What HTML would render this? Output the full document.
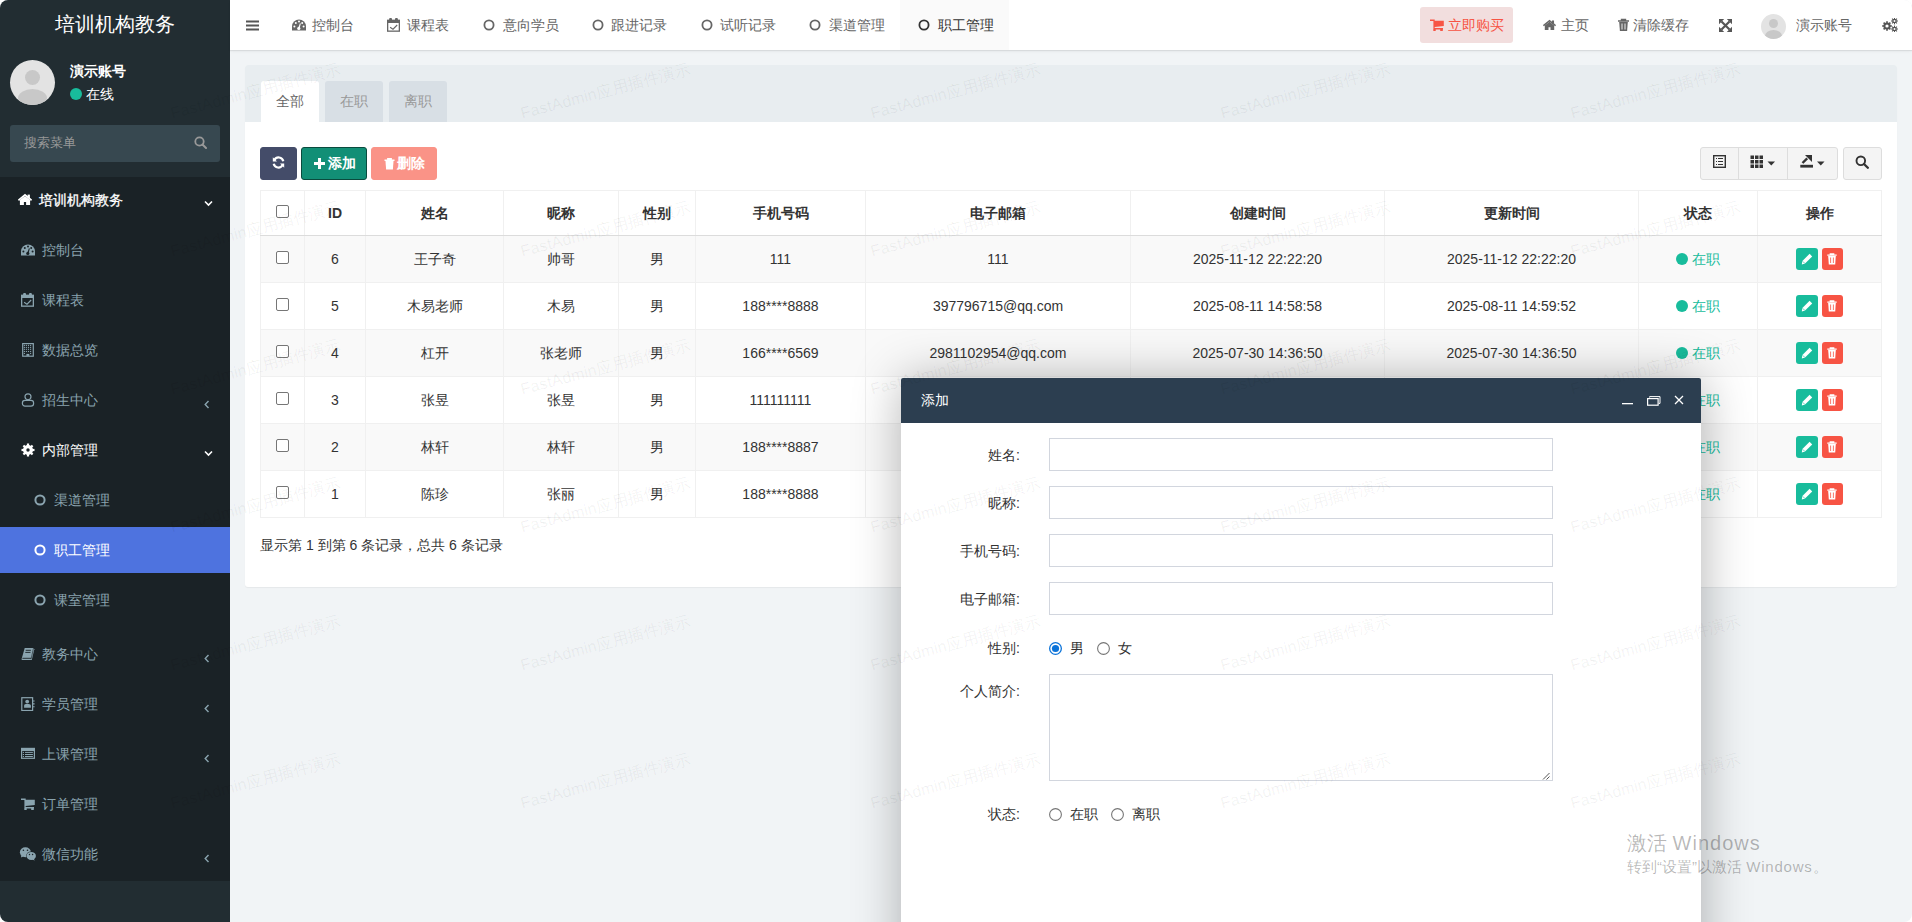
<!DOCTYPE html>
<html><head><meta charset="utf-8">
<style>
*{box-sizing:border-box;margin:0;padding:0}
html,body{width:1912px;height:922px;overflow:hidden;background:#fff}
body{font-family:"Liberation Sans",sans-serif;font-size:14px;color:#333;line-height:20px}
#win{position:absolute;left:0;top:0;width:1912px;height:922px;border-radius:8px;overflow:hidden;background:#f1f4f6}
.a{position:absolute}
svg{display:block}
/* sidebar */
#side{left:0;top:0;width:230px;height:922px;background:#222d32}
#logo{left:0;top:0;width:230px;height:50px;line-height:48px;text-align:center;color:#fff;font-size:20px}
#menu{left:0;top:177px;width:230px;height:704px;background:#1a2226}
.mi{position:absolute;left:0;width:230px;height:20px;line-height:20px;color:#8aa4af;white-space:nowrap}
.mi .ic{position:absolute;top:0;left:0}
.mi .tx{position:absolute;top:0}
.mi.w{color:#fff}
/* navbar */
#nav{left:230px;top:0;width:1682px;height:50px;background:#fff;box-shadow:0 1px 1px rgba(0,0,0,.08),0 2px 3px rgba(0,0,0,.03)}
.ni{position:absolute;top:0;height:50px;line-height:50px;color:#666;white-space:nowrap}
/* content */
#panel{left:245px;top:65px;width:1652px;height:522px;background:#fff;border-radius:3px;box-shadow:0 1px 1px rgba(0,0,0,.05)}
#ph{left:0;top:0;width:1652px;height:57px;background:#e8edf0;border-radius:3px 3px 0 0}
.tab{position:absolute;top:16px;height:41px;width:58px;text-align:center;line-height:41px;background:#d8dfe5;color:#999;border-radius:3px 3px 0 0}
.tab.on{background:#fff;color:#666}
.btn{position:absolute;top:147px;height:33px;border-radius:3px;color:#fff;line-height:31px;text-align:center;white-space:nowrap}
table{position:absolute;left:260px;top:190px;border-collapse:collapse;table-layout:fixed}
td,th{border:1px solid #f0f0f0;text-align:center;vertical-align:middle;padding:0;font-size:14px;color:#333}
th{height:45px;font-weight:bold;border-bottom:1px solid #dcdcdc}
td{height:47px}
tr.s td{background:#f9f9f9}
.cb{display:inline-block;width:13px;height:13px;border:1px solid #767676;border-radius:2px;background:#fff;vertical-align:middle;position:relative;top:-3px}
/* modal */
#shade{left:901px;top:378px;width:800px;height:600px;box-shadow:1px 1px 50px rgba(0,0,0,.3);border-radius:2px}
#modal{left:901px;top:378px;width:800px;height:600px;background:#fff;border-radius:2px 2px 0 0}
#mt{left:0;top:0;width:800px;height:45px;background:#2c3e50;color:#fff;line-height:45px;padding-left:20px;border-radius:2px 2px 0 0}
.lb{position:absolute;width:120px;text-align:right;color:#333;left:0}
.inp{position:absolute;left:148px;width:504px;height:33px;border:1px solid #d2d6de;background:#fff}
.rad{position:absolute;width:13px;height:13px;border:1px solid #767676;border-radius:50%;background:#fff}
.rad.on{border:1px solid #0075ff}
.rad.on:after{content:"";position:absolute;left:2px;top:2px;width:7px;height:7px;border-radius:50%;background:#0075ff}
#wm{left:0;top:0;width:1912px;height:922px;pointer-events:none}
</style></head><body>
<div id="win">

<!-- SIDEBAR -->
<div id="side" class="a">
  <div id="logo" class="a">培训机构教务</div>
  <div class="a" style="left:10px;top:60px;width:45px;height:45px;border-radius:50%;background:#e3e3e3;overflow:hidden">
    <div class="a" style="left:15px;top:10px;width:15px;height:15px;border-radius:50%;background:#c8c8c8"></div>
    <div class="a" style="left:8px;top:29px;width:29px;height:18px;border-radius:50%;background:#c8c8c8"></div>
  </div>
  <div class="a" style="left:70px;top:61px;color:#fff;font-weight:bold;line-height:20px">演示账号</div>
  <div class="a" style="left:70px;top:88px;width:12px;height:12px;border-radius:50%;background:#18bc9c"></div>
  <div class="a" style="left:86px;top:84px;color:#fff;line-height:20px">在线</div>
  <div class="a" style="left:10px;top:125px;width:210px;height:37px;background:#374850;border-radius:3px">
    <div class="a" style="left:14px;top:8px;color:#999;line-height:20px;font-size:13px">搜索菜单</div>
    <svg class="a" style="left:184px;top:11px" width="13" height="13" viewBox="0 0 13 13"><circle cx="5.5" cy="5.5" r="4.2" fill="none" stroke="#999" stroke-width="1.8"/><path d="M8.5 8.5L12 12" stroke="#999" stroke-width="2" stroke-linecap="round"/></svg>
  </div>
  <div id="menu" class="a"></div>
  <div class="mi" style="top:190px;color:#fff;-webkit-text-stroke:0.3px #fff"><svg class="a" style="left:18px;top:3px" width="14" height="14" viewBox="0 0 14 14"><path d="M0.4 7.3L7 1.9l6.6 5.4" fill="none" stroke="#fff" stroke-width="1.7"/><rect x="9.6" y="1.6" width="2.3" height="3.6" fill="#fff"/><path d="M1.9 7L7 2.9l5.1 4.1V12H8.1V9H5.9V12H1.9z" fill="#fff"/></svg><span class="tx" style="left:39px">培训机构教务</span><svg class="a" style="left:204px;top:10px" width="9" height="7" viewBox="0 0 9 7"><path d="M1 1.5l3.5 3.5 3.5-3.5" fill="none" stroke="#fff" stroke-width="1.6"/></svg></div>
<div class="mi" style="top:240px;color:#8aa4af"><svg class="a" style="left:21px;top:4px" width="14" height="14" viewBox="0 0 14 14"><path d="M0 11.5V7.5A7 7 0 0 1 14 7.5V11.5z" fill="#8aa4af"/><g fill="#1a2226"><circle cx="2.4" cy="7.6" r="1"/><circle cx="3.8" cy="4" r="1"/><circle cx="7" cy="2.6" r="1"/><circle cx="10.2" cy="4" r="1"/><circle cx="11.6" cy="7.6" r="1"/><circle cx="6.8" cy="9.4" r="1.6"/><path d="M6.1 9.4L7.9 4.2l0.9 0.3L7.5 9.7z"/></g></svg><span class="tx" style="left:42px">控制台</span></div>
<div class="mi" style="top:290px;color:#8aa4af"><svg class="a" style="left:21px;top:3px" width="14" height="14" viewBox="0 0 14 14"><rect x="0.65" y="2.45" width="11.7" height="10.7" fill="none" stroke="#8aa4af" stroke-width="1.3"/><rect x="0" y="1.8" width="13" height="3.2" fill="#8aa4af"/><rect x="2.1" y="0" width="2.9" height="3.6" rx="1" fill="#8aa4af"/><rect x="8" y="0" width="2.9" height="3.6" rx="1" fill="#8aa4af"/><path d="M3.1 9.2l2.9 2 4.2-4.2" fill="none" stroke="#8aa4af" stroke-width="1.1"/></svg><span class="tx" style="left:42px">课程表</span></div>
<div class="mi" style="top:340px;color:#8aa4af"><svg class="a" style="left:21px;top:3px" width="14" height="14" viewBox="0 0 14 14"><rect x="1.7" y="0.6" width="10.6" height="12.6" fill="none" stroke="#8aa4af" stroke-width="1.2"/><rect x="2.8499999999999996" y="1.8499999999999999" width="1.1" height="1.1" fill="#8aa4af"/><rect x="4.8500000000000005" y="1.8499999999999999" width="1.1" height="1.1" fill="#8aa4af"/><rect x="6.95" y="1.8499999999999999" width="1.1" height="1.1" fill="#8aa4af"/><rect x="9.049999999999999" y="1.8499999999999999" width="1.1" height="1.1" fill="#8aa4af"/><rect x="2.8499999999999996" y="3.8500000000000005" width="1.1" height="1.1" fill="#8aa4af"/><rect x="4.8500000000000005" y="3.8500000000000005" width="1.1" height="1.1" fill="#8aa4af"/><rect x="6.95" y="3.8500000000000005" width="1.1" height="1.1" fill="#8aa4af"/><rect x="9.049999999999999" y="3.8500000000000005" width="1.1" height="1.1" fill="#8aa4af"/><rect x="2.8499999999999996" y="5.75" width="1.1" height="1.1" fill="#8aa4af"/><rect x="4.8500000000000005" y="5.75" width="1.1" height="1.1" fill="#8aa4af"/><rect x="6.95" y="5.75" width="1.1" height="1.1" fill="#8aa4af"/><rect x="9.049999999999999" y="5.75" width="1.1" height="1.1" fill="#8aa4af"/><rect x="2.8499999999999996" y="7.95" width="1.1" height="1.1" fill="#8aa4af"/><rect x="4.8500000000000005" y="7.95" width="1.1" height="1.1" fill="#8aa4af"/><rect x="6.95" y="7.95" width="1.1" height="1.1" fill="#8aa4af"/><rect x="9.049999999999999" y="7.95" width="1.1" height="1.1" fill="#8aa4af"/><rect x="2.85" y="9.95" width="1.1" height="1.1" fill="#8aa4af"/><rect x="9.05" y="9.95" width="1.1" height="1.1" fill="#8aa4af"/><rect x="5.4" y="10.9" width="2.9" height="2" fill="#8aa4af"/></svg><span class="tx" style="left:42px">数据总览</span></div>
<div class="mi" style="top:390px;color:#8aa4af"><svg class="a" style="left:21px;top:3px" width="14" height="14" viewBox="0 0 14 14"><circle cx="7" cy="3.8" r="3" fill="none" stroke="#8aa4af" stroke-width="1.2"/><rect x="1.4" y="7.4" width="11.2" height="5.8" rx="2.6" fill="none" stroke="#8aa4af" stroke-width="1.2"/><path d="M4.6 7.4h4.8" stroke="#1a2226" stroke-width="0"/></svg><span class="tx" style="left:42px">招生中心</span><svg class="a" style="left:204px;top:10px" width="6" height="9" viewBox="0 0 6 9"><path d="M4.5 1L1.2 4.5 4.5 8" fill="none" stroke="#8aa4af" stroke-width="1.4"/></svg></div>
<div class="mi" style="top:440px;color:#fff"><svg class="a" style="left:21px;top:3px" width="14" height="14" viewBox="0 0 14 14"><g fill="#fff"><circle cx="7" cy="7" r="5"/><rect x="5.9" y="0.5" width="2.2" height="2.5" transform="rotate(0 7 7)"/><rect x="5.9" y="0.5" width="2.2" height="2.5" transform="rotate(45 7 7)"/><rect x="5.9" y="0.5" width="2.2" height="2.5" transform="rotate(90 7 7)"/><rect x="5.9" y="0.5" width="2.2" height="2.5" transform="rotate(135 7 7)"/><rect x="5.9" y="0.5" width="2.2" height="2.5" transform="rotate(180 7 7)"/><rect x="5.9" y="0.5" width="2.2" height="2.5" transform="rotate(225 7 7)"/><rect x="5.9" y="0.5" width="2.2" height="2.5" transform="rotate(270 7 7)"/><rect x="5.9" y="0.5" width="2.2" height="2.5" transform="rotate(315 7 7)"/></g><circle cx="7" cy="7" r="1.7" fill="#1a2226"/></svg><span class="tx" style="left:42px">内部管理</span><svg class="a" style="left:204px;top:10px" width="9" height="7" viewBox="0 0 9 7"><path d="M1 1.5l3.5 3.5 3.5-3.5" fill="none" stroke="#fff" stroke-width="1.6"/></svg></div>
<div class="mi" style="top:490px;color:#8aa4af"><svg class="a" style="left:34px;top:4px" width="12" height="12" viewBox="0 0 12 12"><circle cx="6" cy="6" r="4.6" fill="none" stroke="#8aa4af" stroke-width="2"/></svg><span class="tx" style="left:54px">渠道管理</span></div>
<div class="a" style="left:0;top:527px;width:230px;height:46px;background:#4e73df"></div>
<div class="mi" style="top:540px;color:#fff"><svg class="a" style="left:34px;top:4px" width="12" height="12" viewBox="0 0 12 12"><circle cx="6" cy="6" r="4.6" fill="none" stroke="#fff" stroke-width="2"/></svg><span class="tx" style="left:54px">职工管理</span></div>
<div class="mi" style="top:590px;color:#8aa4af"><svg class="a" style="left:34px;top:4px" width="12" height="12" viewBox="0 0 12 12"><circle cx="6" cy="6" r="4.6" fill="none" stroke="#8aa4af" stroke-width="2"/></svg><span class="tx" style="left:54px">课室管理</span></div>
<div class="mi" style="top:644px;color:#8aa4af"><svg class="a" style="left:21px;top:3px" width="14" height="14" viewBox="0 0 14 14"><path d="M3.7 1h8.8l0.8 1.2-2.5 10.8H1.2Q0.3 13 0.6 11.9z" fill="#8aa4af"/><path d="M1.4 11.3h8.6M4.7 3.3h5.2M4.3 5.4h5.2" stroke="#1a2226" stroke-width="0.9"/><path d="M12.5 1l-2.4 11.2" stroke="#1a2226" stroke-width="0.6"/></svg><span class="tx" style="left:42px">教务中心</span><svg class="a" style="left:204px;top:10px" width="6" height="9" viewBox="0 0 6 9"><path d="M4.5 1L1.2 4.5 4.5 8" fill="none" stroke="#8aa4af" stroke-width="1.4"/></svg></div>
<div class="mi" style="top:694px;color:#8aa4af"><svg class="a" style="left:21px;top:3px" width="14" height="14" viewBox="0 0 14 14"><rect x="0.8" y="0.7" width="10.8" height="12.8" fill="none" stroke="#8aa4af" stroke-width="1.2"/><circle cx="6.2" cy="4.6" r="1.9" fill="#8aa4af"/><path d="M3.1 10.8V8.6Q3.1 7 4.8 7h2.8Q9.9 7 9.9 8.6v2.2z" fill="#8aa4af"/><path d="M12 4h1.6M12 6.9h1.6M12 9.8h1.6" stroke="#8aa4af" stroke-width="1.1"/></svg><span class="tx" style="left:42px">学员管理</span><svg class="a" style="left:204px;top:10px" width="6" height="9" viewBox="0 0 6 9"><path d="M4.5 1L1.2 4.5 4.5 8" fill="none" stroke="#8aa4af" stroke-width="1.4"/></svg></div>
<div class="mi" style="top:744px;color:#8aa4af"><svg class="a" style="left:21px;top:3px" width="14" height="14" viewBox="0 0 14 14"><rect x="0.6" y="1.5" width="12.8" height="9.8" fill="none" stroke="#8aa4af" stroke-width="1.2"/><rect x="0" y="0.9" width="14" height="3.1" fill="#8aa4af"/><path d="M1.8 5.4h1.2M4 5.4h7.9M1.8 7.5h1.2M4 7.5h7.9M1.8 9.5h1.2M4 9.5h7.9" stroke="#8aa4af" stroke-width="1"/></svg><span class="tx" style="left:42px">上课管理</span><svg class="a" style="left:204px;top:10px" width="6" height="9" viewBox="0 0 6 9"><path d="M4.5 1L1.2 4.5 4.5 8" fill="none" stroke="#8aa4af" stroke-width="1.4"/></svg></div>
<div class="mi" style="top:794px;color:#8aa4af"><svg class="a" style="left:21px;top:3px" width="14" height="14" viewBox="0 0 14 14"><path d="M0 1.6h3.6v1.3H0zM3.4 1.6h1.3v11.4H3.4zM3.4 2.8h10.4v5.2l-9.2 1H3.4zM3.4 9.9h9.6v1.6H3.4zM3.3 11h2.4v2H3.3zM10.2 11h2.6v2h-2.6z" fill="#8aa4af"/></svg><span class="tx" style="left:42px">订单管理</span></div>
<div class="mi" style="top:844px;color:#8aa4af"><svg class="a" style="left:19px;top:3px" width="18" height="15" viewBox="0 0 18 15"><ellipse cx="6.4" cy="5.3" rx="5.5" ry="5" fill="#8aa4af"/><path d="M1.8 8.2l0.6 2.4 2.6-1.6z" fill="#8aa4af"/><ellipse cx="12.2" cy="8.9" rx="5.1" ry="4.4" fill="#1a2226"/><ellipse cx="12.2" cy="8.9" rx="4.7" ry="4" fill="#8aa4af"/><path d="M14.6 11.6l1.2 1.9-2.8-1z" fill="#8aa4af"/><circle cx="4.4" cy="3.3" r="0.8" fill="#1a2226"/><circle cx="8.5" cy="3.3" r="0.8" fill="#1a2226"/><circle cx="10.5" cy="7.5" r="0.7" fill="#1a2226"/><circle cx="13.6" cy="7.5" r="0.7" fill="#1a2226"/></svg><span class="tx" style="left:42px">微信功能</span><svg class="a" style="left:204px;top:10px" width="6" height="9" viewBox="0 0 6 9"><path d="M4.5 1L1.2 4.5 4.5 8" fill="none" stroke="#8aa4af" stroke-width="1.4"/></svg></div>
</div>

<!-- NAVBAR -->
<div id="nav" class="a">
<div class="a" style="left:670px;top:0;width:109px;height:50px;background:#fafafa"></div>
<svg class="a" style="left:16px;top:20px" width="13" height="11" viewBox="0 0 13 11"><rect x="0" y="0.5" width="13" height="2" fill="#555"/><rect x="0" y="4.5" width="13" height="2" fill="#555"/><rect x="0" y="8.5" width="13" height="2" fill="#555"/></svg>
<div class="a" style="left:62px;top:19px"><svg class="a" style="left:0px;top:0px" width="14" height="14" viewBox="0 0 14 14"><path d="M0 11.5V7.5A7 7 0 0 1 14 7.5V11.5z" fill="#666"/><g fill="#fff"><circle cx="2.4" cy="7.6" r="1"/><circle cx="3.8" cy="4" r="1"/><circle cx="7" cy="2.6" r="1"/><circle cx="10.2" cy="4" r="1"/><circle cx="11.6" cy="7.6" r="1"/><circle cx="6.8" cy="9.4" r="1.6"/><path d="M6.1 9.4L7.9 4.2l0.9 0.3L7.5 9.7z"/></g></svg></div><div class="ni" style="left:82px;color:#666">控制台</div>
<div class="a" style="left:157px;top:18px"><svg class="a" style="left:0px;top:0px" width="14" height="14" viewBox="0 0 14 14"><rect x="0.65" y="2.45" width="11.7" height="10.7" fill="none" stroke="#666" stroke-width="1.3"/><rect x="0" y="1.8" width="13" height="3.2" fill="#666"/><rect x="2.1" y="0" width="2.9" height="3.6" rx="1" fill="#666"/><rect x="8" y="0" width="2.9" height="3.6" rx="1" fill="#666"/><path d="M3.1 9.2l2.9 2 4.2-4.2" fill="none" stroke="#666" stroke-width="1.1"/></svg></div><div class="ni" style="left:177px;color:#666">课程表</div>
<div class="a" style="left:253px;top:19px"><svg class="a" style="left:0px;top:0px" width="12" height="12" viewBox="0 0 12 12"><circle cx="6" cy="6" r="4.6" fill="none" stroke="#666" stroke-width="1.8"/></svg></div><div class="ni" style="left:273px;color:#666">意向学员</div>
<div class="a" style="left:362px;top:19px"><svg class="a" style="left:0px;top:0px" width="12" height="12" viewBox="0 0 12 12"><circle cx="6" cy="6" r="4.6" fill="none" stroke="#666" stroke-width="1.8"/></svg></div><div class="ni" style="left:381px;color:#666">跟进记录</div>
<div class="a" style="left:471px;top:19px"><svg class="a" style="left:0px;top:0px" width="12" height="12" viewBox="0 0 12 12"><circle cx="6" cy="6" r="4.6" fill="none" stroke="#666" stroke-width="1.8"/></svg></div><div class="ni" style="left:490px;color:#666">试听记录</div>
<div class="a" style="left:579px;top:19px"><svg class="a" style="left:0px;top:0px" width="12" height="12" viewBox="0 0 12 12"><circle cx="6" cy="6" r="4.6" fill="none" stroke="#666" stroke-width="1.8"/></svg></div><div class="ni" style="left:599px;color:#666">渠道管理</div>
<div class="a" style="left:688px;top:19px"><svg class="a" style="left:0px;top:0px" width="12" height="12" viewBox="0 0 12 12"><circle cx="6" cy="6" r="4.6" fill="none" stroke="#333" stroke-width="1.8"/></svg></div><div class="ni" style="left:708px;color:#333">职工管理</div>
<div class="a" style="left:1190px;top:7px;width:93px;height:36px;background:#f2dede;border-radius:3px"></div>
<div class="a" style="left:1200px;top:18px"><svg class="a" style="left:0px;top:0px" width="14" height="14" viewBox="0 0 14 14"><path d="M0 1.6h3.6v1.3H0zM3.4 1.6h1.3v11.4H3.4zM3.4 2.8h10.4v5.2l-9.2 1H3.4zM3.4 9.9h9.6v1.6H3.4zM3.3 11h2.4v2H3.3zM10.2 11h2.6v2h-2.6z" fill="#f75444"/></svg></div><div class="ni" style="left:1218px;color:#f75444">立即购买</div>
<div class="a" style="left:1313px;top:19px"><svg class="a" style="left:0px;top:0px" width="13" height="12" viewBox="0 0 14 13"><path d="M0.4 7.3L7 1.9l6.6 5.4" fill="none" stroke="#666" stroke-width="1.7"/><rect x="9.6" y="1.6" width="2.3" height="3.6" fill="#666"/><path d="M1.9 7L7 2.9l5.1 4.1V12H8.1V9H5.9V12H1.9z" fill="#666"/></svg></div><div class="ni" style="left:1331px;color:#666">主页</div>
<div class="a" style="left:1387px;top:18px"><svg class="a" style="left:0px;top:0px" width="13" height="14" viewBox="0 0 13 14"><path d="M1 3h11M4.5 3V1.5h4V3" stroke="#666" stroke-width="1.4" fill="none"/><path d="M2.2 4h8.6l-0.7 9H2.9z" fill="#666"/><path d="M5 5.5v6M8 5.5v6" stroke="#fff" stroke-width="0.9"/></svg></div><div class="ni" style="left:1403px;color:#666">清除缓存</div>
<svg class="a" style="left:1489px;top:19px" width="13" height="13" viewBox="0 0 13 13"><path d="M2.5 2.5L10.5 10.5M10.5 2.5L2.5 10.5" stroke="#555" stroke-width="2.2"/><path d="M0 0h5.2L0 5.2zM13 0v5.2L7.8 0zM0 13V7.8L5.2 13zM13 13H7.8L13 7.8z" fill="#555"/></svg>
<div class="a" style="left:1531px;top:14px;width:25px;height:25px;border-radius:50%;background:#e3e3e3;overflow:hidden"><div class="a" style="left:8px;top:5px;width:9px;height:9px;border-radius:50%;background:#c8c8c8"></div><div class="a" style="left:4px;top:16px;width:17px;height:12px;border-radius:50%;background:#c8c8c8"></div></div>
<div class="ni" style="left:1566px">演示账号</div>
<svg class="a" style="left:1652px;top:18px" width="16" height="14" viewBox="0 0 16 14"><g fill="#555"><circle cx="5" cy="8" r="3.6"/><rect x="4.2" y="3.2" width="1.6" height="9.6" transform="rotate(0 5 8)"/><rect x="4.2" y="3.2" width="1.6" height="9.6" transform="rotate(45 5 8)"/><rect x="4.2" y="3.2" width="1.6" height="9.6" transform="rotate(90 5 8)"/><rect x="4.2" y="3.2" width="1.6" height="9.6" transform="rotate(135 5 8)"/></g><circle cx="5" cy="8" r="1.62" fill="#fff"/><g fill="#555"><circle cx="12.5" cy="3" r="2.2"/><rect x="11.95" y="-0.40000000000000013" width="1.1" height="6.800000000000001" transform="rotate(0 12.5 3)"/><rect x="11.95" y="-0.40000000000000013" width="1.1" height="6.800000000000001" transform="rotate(45 12.5 3)"/><rect x="11.95" y="-0.40000000000000013" width="1.1" height="6.800000000000001" transform="rotate(90 12.5 3)"/><rect x="11.95" y="-0.40000000000000013" width="1.1" height="6.800000000000001" transform="rotate(135 12.5 3)"/></g><circle cx="12.5" cy="3" r="0.9900000000000001" fill="#fff"/><g fill="#555"><circle cx="12.5" cy="11" r="2.2"/><rect x="11.95" y="7.6000000000000005" width="1.1" height="6.800000000000001" transform="rotate(0 12.5 11)"/><rect x="11.95" y="7.6000000000000005" width="1.1" height="6.800000000000001" transform="rotate(45 12.5 11)"/><rect x="11.95" y="7.6000000000000005" width="1.1" height="6.800000000000001" transform="rotate(90 12.5 11)"/><rect x="11.95" y="7.6000000000000005" width="1.1" height="6.800000000000001" transform="rotate(135 12.5 11)"/></g><circle cx="12.5" cy="11" r="0.9900000000000001" fill="#fff"/></svg>
</div>

<!-- CONTENT -->
<div id="panel" class="a">
  <div id="ph" class="a">
    <div class="tab on" style="left:16px">全部</div>
    <div class="tab" style="left:80px">在职</div>
    <div class="tab" style="left:144px">离职</div>
  </div>
</div>
<div class="btn" style="left:260px;width:37px;background:#444c69;border:1px solid #444c69"><svg class="a" style="left:11px;top:8px" width="13" height="13" viewBox="0 0 13 13"><path d="M11.3 5.2A4.8 4.8 0 0 0 2.4 4" fill="none" stroke="#fff" stroke-width="2.2"/><path d="M0.8 1.2v4.2H5z" fill="#fff"/><path d="M1.7 7.8A4.8 4.8 0 0 0 10.6 9" fill="none" stroke="#fff" stroke-width="2.2"/><path d="M12.2 11.8V7.6H8z" fill="#fff"/></svg></div>
<div class="btn" style="left:301px;width:66px;background:#128f76;border:1px solid #0a4b3e;font-weight:bold"><svg class="a" style="left:12px;top:10px" width="11" height="11" viewBox="0 0 11 11"><path d="M4 0h3v4h4v3H7v4H4V7H0V4h4z" fill="#fff"/></svg><span class="a" style="left:26px;top:0;line-height:31px">添加</span></div>
<div class="btn" style="left:371px;width:66px;background:#fa9387;border:1px solid #fa9387;font-weight:bold"><svg class="a" style="left:12px;top:10px" width="11" height="12" viewBox="0 0 11 12"><path d="M0.5 2.2h10M3.8 2.2V0.8h3.4v1.4" stroke="#fff" stroke-width="1.4" fill="none"/><path d="M1.5 3h8l-0.6 8.5H2.1z" fill="#fff"/></svg><span class="a" style="left:25px;top:0;line-height:31px">删除</span></div>
<div class="a" style="left:1700px;top:147px;width:138px;height:33px;border:1px solid #ddd;border-radius:3px;background:#f4f4f4"></div>
<div class="a" style="left:1738px;top:148px;width:1px;height:31px;background:#ddd"></div>
<div class="a" style="left:1787px;top:148px;width:1px;height:31px;background:#ddd"></div>
<svg class="a" style="left:1713px;top:155px" width="13" height="13" viewBox="0 0 13 13"><rect x="0.7" y="0.7" width="11.6" height="11.6" fill="none" stroke="#333" stroke-width="1.4"/><path d="M3 3.5h1M5 3.5h5M3 6.5h1M5 6.5h5M3 9.5h1M5 9.5h5" stroke="#333" stroke-width="1.2"/></svg>
<svg class="a" style="left:1750px;top:155px" width="26" height="14" viewBox="0 0 26 14"><rect x="0.5" y="0.5" width="3.5" height="3.5" fill="#333"/><rect x="0.5" y="5" width="3.5" height="3.5" fill="#333"/><rect x="0.5" y="9.5" width="3.5" height="3.5" fill="#333"/><rect x="5" y="0.5" width="3.5" height="3.5" fill="#333"/><rect x="5" y="5" width="3.5" height="3.5" fill="#333"/><rect x="5" y="9.5" width="3.5" height="3.5" fill="#333"/><rect x="9.5" y="0.5" width="3.5" height="3.5" fill="#333"/><rect x="9.5" y="5" width="3.5" height="3.5" fill="#333"/><rect x="9.5" y="9.5" width="3.5" height="3.5" fill="#333"/><path d="M17.5 6.5h7.5l-3.75 4z" fill="#333"/></svg>
<svg class="a" style="left:1799px;top:154px" width="26" height="14" viewBox="0 0 26 14"><rect x="1.3" y="10.8" width="12.7" height="2.8" fill="#333"/><path d="M3.5 9L8.2 4.3" stroke="#333" stroke-width="2.4"/><path d="M6 1h7v7z" fill="#333"/><path d="M18 7.5h7.5l-3.75 4z" fill="#333"/></svg>
<div class="a" style="left:1843px;top:147px;width:39px;height:33px;border:1px solid #ddd;border-radius:3px;background:#f4f4f4"></div>
<svg class="a" style="left:1855px;top:155px" width="14" height="14" viewBox="0 0 14 14"><circle cx="5.8" cy="5.8" r="4.3" fill="none" stroke="#333" stroke-width="1.9"/><path d="M9 9l3.8 3.8" stroke="#333" stroke-width="2.3" stroke-linecap="round"/></svg>
<table><colgroup><col style="width:44px"><col style="width:61px"><col style="width:138px"><col style="width:115px"><col style="width:77px"><col style="width:170px"><col style="width:265px"><col style="width:254px"><col style="width:254px"><col style="width:119px"><col style="width:124px"></colgroup><tr><th><span class="cb"></span></th><th>ID</th><th>姓名</th><th>昵称</th><th>性别</th><th>手机号码</th><th>电子邮箱</th><th>创建时间</th><th>更新时间</th><th>状态</th><th>操作</th></tr><tr class="s"><td><span class="cb"></span></td><td>6</td><td>王子奇</td><td>帅哥</td><td>男</td><td>111</td><td>111</td><td>2025-11-12 22:22:20</td><td>2025-11-12 22:22:20</td><td><span style="display:inline-block;width:12px;height:12px;border-radius:50%;background:#18bc9c;vertical-align:-1px;margin-right:4px"></span><span style="color:#18bc9c">在职</span></td><td><span style="display:inline-block;position:relative;width:22px;height:22px;background:#18bc9c;border-radius:3px;vertical-align:middle"><svg class="a" style="left:5px;top:5px" width="12" height="12" viewBox="0 0 12 12"><path d="M8.6 0.8l2.6 2.6-7.2 7.2-3.2 0.8 0.6-3.4z" fill="#fff"/><path d="M1.8 8.4l1.8 1.8" stroke="#18bc9c" stroke-width="0.7"/></svg></span><span style="display:inline-block;position:relative;width:21px;height:22px;background:#f75444;border-radius:3px;vertical-align:middle;margin-left:4px"><svg class="a" style="left:5px;top:5px" width="10" height="12" viewBox="0 0 10 12"><path d="M0.3 2.2h9.4M3.3 2.2V0.8h3.4v1.4" stroke="#fff" stroke-width="1.3" fill="none"/><path d="M1.2 3h7.6l-0.6 8.5H1.8z" fill="#fff"/><path d="M3.6 4.5v5.5M6.4 4.5v5.5" stroke="#f75444" stroke-width="0.8"/></svg></span></td></tr><tr><td><span class="cb"></span></td><td>5</td><td>木易老师</td><td>木易</td><td>男</td><td>188****8888</td><td>397796715@qq.com</td><td>2025-08-11 14:58:58</td><td>2025-08-11 14:59:52</td><td><span style="display:inline-block;width:12px;height:12px;border-radius:50%;background:#18bc9c;vertical-align:-1px;margin-right:4px"></span><span style="color:#18bc9c">在职</span></td><td><span style="display:inline-block;position:relative;width:22px;height:22px;background:#18bc9c;border-radius:3px;vertical-align:middle"><svg class="a" style="left:5px;top:5px" width="12" height="12" viewBox="0 0 12 12"><path d="M8.6 0.8l2.6 2.6-7.2 7.2-3.2 0.8 0.6-3.4z" fill="#fff"/><path d="M1.8 8.4l1.8 1.8" stroke="#18bc9c" stroke-width="0.7"/></svg></span><span style="display:inline-block;position:relative;width:21px;height:22px;background:#f75444;border-radius:3px;vertical-align:middle;margin-left:4px"><svg class="a" style="left:5px;top:5px" width="10" height="12" viewBox="0 0 10 12"><path d="M0.3 2.2h9.4M3.3 2.2V0.8h3.4v1.4" stroke="#fff" stroke-width="1.3" fill="none"/><path d="M1.2 3h7.6l-0.6 8.5H1.8z" fill="#fff"/><path d="M3.6 4.5v5.5M6.4 4.5v5.5" stroke="#f75444" stroke-width="0.8"/></svg></span></td></tr><tr class="s"><td><span class="cb"></span></td><td>4</td><td>杠开</td><td>张老师</td><td>男</td><td>166****6569</td><td>2981102954@qq.com</td><td>2025-07-30 14:36:50</td><td>2025-07-30 14:36:50</td><td><span style="display:inline-block;width:12px;height:12px;border-radius:50%;background:#18bc9c;vertical-align:-1px;margin-right:4px"></span><span style="color:#18bc9c">在职</span></td><td><span style="display:inline-block;position:relative;width:22px;height:22px;background:#18bc9c;border-radius:3px;vertical-align:middle"><svg class="a" style="left:5px;top:5px" width="12" height="12" viewBox="0 0 12 12"><path d="M8.6 0.8l2.6 2.6-7.2 7.2-3.2 0.8 0.6-3.4z" fill="#fff"/><path d="M1.8 8.4l1.8 1.8" stroke="#18bc9c" stroke-width="0.7"/></svg></span><span style="display:inline-block;position:relative;width:21px;height:22px;background:#f75444;border-radius:3px;vertical-align:middle;margin-left:4px"><svg class="a" style="left:5px;top:5px" width="10" height="12" viewBox="0 0 10 12"><path d="M0.3 2.2h9.4M3.3 2.2V0.8h3.4v1.4" stroke="#fff" stroke-width="1.3" fill="none"/><path d="M1.2 3h7.6l-0.6 8.5H1.8z" fill="#fff"/><path d="M3.6 4.5v5.5M6.4 4.5v5.5" stroke="#f75444" stroke-width="0.8"/></svg></span></td></tr><tr><td><span class="cb"></span></td><td>3</td><td>张昱</td><td>张昱</td><td>男</td><td>111111111</td><td></td><td></td><td></td><td><span style="display:inline-block;width:12px;height:12px;border-radius:50%;background:#18bc9c;vertical-align:-1px;margin-right:4px"></span><span style="color:#18bc9c">在职</span></td><td><span style="display:inline-block;position:relative;width:22px;height:22px;background:#18bc9c;border-radius:3px;vertical-align:middle"><svg class="a" style="left:5px;top:5px" width="12" height="12" viewBox="0 0 12 12"><path d="M8.6 0.8l2.6 2.6-7.2 7.2-3.2 0.8 0.6-3.4z" fill="#fff"/><path d="M1.8 8.4l1.8 1.8" stroke="#18bc9c" stroke-width="0.7"/></svg></span><span style="display:inline-block;position:relative;width:21px;height:22px;background:#f75444;border-radius:3px;vertical-align:middle;margin-left:4px"><svg class="a" style="left:5px;top:5px" width="10" height="12" viewBox="0 0 10 12"><path d="M0.3 2.2h9.4M3.3 2.2V0.8h3.4v1.4" stroke="#fff" stroke-width="1.3" fill="none"/><path d="M1.2 3h7.6l-0.6 8.5H1.8z" fill="#fff"/><path d="M3.6 4.5v5.5M6.4 4.5v5.5" stroke="#f75444" stroke-width="0.8"/></svg></span></td></tr><tr class="s"><td><span class="cb"></span></td><td>2</td><td>林轩</td><td>林轩</td><td>男</td><td>188****8887</td><td></td><td></td><td></td><td><span style="display:inline-block;width:12px;height:12px;border-radius:50%;background:#18bc9c;vertical-align:-1px;margin-right:4px"></span><span style="color:#18bc9c">在职</span></td><td><span style="display:inline-block;position:relative;width:22px;height:22px;background:#18bc9c;border-radius:3px;vertical-align:middle"><svg class="a" style="left:5px;top:5px" width="12" height="12" viewBox="0 0 12 12"><path d="M8.6 0.8l2.6 2.6-7.2 7.2-3.2 0.8 0.6-3.4z" fill="#fff"/><path d="M1.8 8.4l1.8 1.8" stroke="#18bc9c" stroke-width="0.7"/></svg></span><span style="display:inline-block;position:relative;width:21px;height:22px;background:#f75444;border-radius:3px;vertical-align:middle;margin-left:4px"><svg class="a" style="left:5px;top:5px" width="10" height="12" viewBox="0 0 10 12"><path d="M0.3 2.2h9.4M3.3 2.2V0.8h3.4v1.4" stroke="#fff" stroke-width="1.3" fill="none"/><path d="M1.2 3h7.6l-0.6 8.5H1.8z" fill="#fff"/><path d="M3.6 4.5v5.5M6.4 4.5v5.5" stroke="#f75444" stroke-width="0.8"/></svg></span></td></tr><tr><td><span class="cb"></span></td><td>1</td><td>陈珍</td><td>张丽</td><td>男</td><td>188****8888</td><td></td><td></td><td></td><td><span style="display:inline-block;width:12px;height:12px;border-radius:50%;background:#18bc9c;vertical-align:-1px;margin-right:4px"></span><span style="color:#18bc9c">在职</span></td><td><span style="display:inline-block;position:relative;width:22px;height:22px;background:#18bc9c;border-radius:3px;vertical-align:middle"><svg class="a" style="left:5px;top:5px" width="12" height="12" viewBox="0 0 12 12"><path d="M8.6 0.8l2.6 2.6-7.2 7.2-3.2 0.8 0.6-3.4z" fill="#fff"/><path d="M1.8 8.4l1.8 1.8" stroke="#18bc9c" stroke-width="0.7"/></svg></span><span style="display:inline-block;position:relative;width:21px;height:22px;background:#f75444;border-radius:3px;vertical-align:middle;margin-left:4px"><svg class="a" style="left:5px;top:5px" width="10" height="12" viewBox="0 0 10 12"><path d="M0.3 2.2h9.4M3.3 2.2V0.8h3.4v1.4" stroke="#fff" stroke-width="1.3" fill="none"/><path d="M1.2 3h7.6l-0.6 8.5H1.8z" fill="#fff"/><path d="M3.6 4.5v5.5M6.4 4.5v5.5" stroke="#f75444" stroke-width="0.8"/></svg></span></td></tr></table>
<div class="a" style="left:260px;top:535px;line-height:20px;color:#333">显示第 1 到第 6 条记录，总共 6 条记录</div>

<!-- MODAL -->
<div id="shade" class="a"></div>
<div id="modal" class="a">
  <div id="mt" class="a">添加</div>
  <div class="lb" style="top:67px;left:0;width:119px">姓名:</div>
<div class="inp" style="top:60px"></div>
<div class="lb" style="top:115px;left:0;width:119px">昵称:</div>
<div class="inp" style="top:108px"></div>
<div class="lb" style="top:163px;left:0;width:119px">手机号码:</div>
<div class="inp" style="top:156px"></div>
<div class="lb" style="top:211px;left:0;width:119px">电子邮箱:</div>
<div class="inp" style="top:204px"></div>
<div class="lb" style="top:260px;left:0;width:119px">性别:</div>
<svg class="a" style="left:148px;top:264px" width="13" height="13" viewBox="0 0 13 13"><circle cx="6.5" cy="6.5" r="5.85" fill="#fff" stroke="#0b73d9" stroke-width="1.3"/><circle cx="6.5" cy="6.5" r="3.6" fill="#0b73d9"/></svg><div class="a" style="left:169px;top:260px">男</div>
<svg class="a" style="left:196px;top:264px" width="13" height="13" viewBox="0 0 13 13"><circle cx="6.5" cy="6.5" r="5.9" fill="#fff" stroke="#767676" stroke-width="1.1"/></svg><div class="a" style="left:217px;top:260px">女</div>
<div class="lb" style="top:303px;left:0;width:119px">个人简介:</div>
<div class="inp" style="top:296px;height:107px"></div>
<svg class="a" style="left:641px;top:394px" width="8" height="8" viewBox="0 0 8 8"><path d="M1 7.5L7.5 1M4.5 7.5L7.5 4.5" stroke="#555" stroke-width="1"/></svg>
<div class="lb" style="top:426px;left:0;width:119px">状态:</div>
<svg class="a" style="left:148px;top:430px" width="13" height="13" viewBox="0 0 13 13"><circle cx="6.5" cy="6.5" r="5.9" fill="#fff" stroke="#767676" stroke-width="1.1"/></svg><div class="a" style="left:169px;top:426px">在职</div>
<svg class="a" style="left:210px;top:430px" width="13" height="13" viewBox="0 0 13 13"><circle cx="6.5" cy="6.5" r="5.9" fill="#fff" stroke="#767676" stroke-width="1.1"/></svg><div class="a" style="left:231px;top:426px">离职</div><svg class="a" style="left:721px;top:25px" width="12" height="2" viewBox="0 0 12 2"><rect width="11" height="1.3" fill="#fff"/></svg><svg class="a" style="left:746px;top:18px" width="14" height="10" viewBox="0 0 14 10"><rect x="0.6" y="2.6" width="10.5" height="6.6" fill="none" stroke="#fff" stroke-width="1.2"/><path d="M2.6 1.6V0.6h10.4v6.8h-1.2" fill="none" stroke="#fff" stroke-width="1"/></svg><svg class="a" style="left:773px;top:17px" width="10" height="10" viewBox="0 0 10 10"><path d="M1 1l8 8M9 1L1 9" stroke="#fff" stroke-width="1.3"/></svg>
</div>

<div id="wm" class="a"><div class="a" style="left:-179px;top:114.2px;width:174px;height:0;white-space:nowrap;font-size:16px;line-height:0;color:rgba(0,0,0,.06);letter-spacing:0.2px;transform:rotate(-15deg);transform-origin:0 0">FastAdmin应用插件演示</div>
<div class="a" style="left:171px;top:114.2px;width:174px;height:0;white-space:nowrap;font-size:16px;line-height:0;color:rgba(0,0,0,.06);letter-spacing:0.2px;transform:rotate(-15deg);transform-origin:0 0">FastAdmin应用插件演示</div>
<div class="a" style="left:521px;top:114.2px;width:174px;height:0;white-space:nowrap;font-size:16px;line-height:0;color:rgba(0,0,0,.06);letter-spacing:0.2px;transform:rotate(-15deg);transform-origin:0 0">FastAdmin应用插件演示</div>
<div class="a" style="left:871px;top:114.2px;width:174px;height:0;white-space:nowrap;font-size:16px;line-height:0;color:rgba(0,0,0,.06);letter-spacing:0.2px;transform:rotate(-15deg);transform-origin:0 0">FastAdmin应用插件演示</div>
<div class="a" style="left:1221px;top:114.2px;width:174px;height:0;white-space:nowrap;font-size:16px;line-height:0;color:rgba(0,0,0,.06);letter-spacing:0.2px;transform:rotate(-15deg);transform-origin:0 0">FastAdmin应用插件演示</div>
<div class="a" style="left:1571px;top:114.2px;width:174px;height:0;white-space:nowrap;font-size:16px;line-height:0;color:rgba(0,0,0,.06);letter-spacing:0.2px;transform:rotate(-15deg);transform-origin:0 0">FastAdmin应用插件演示</div>
<div class="a" style="left:1921px;top:114.2px;width:174px;height:0;white-space:nowrap;font-size:16px;line-height:0;color:rgba(0,0,0,.06);letter-spacing:0.2px;transform:rotate(-15deg);transform-origin:0 0">FastAdmin应用插件演示</div>
<div class="a" style="left:-179px;top:252.1px;width:174px;height:0;white-space:nowrap;font-size:16px;line-height:0;color:rgba(0,0,0,.06);letter-spacing:0.2px;transform:rotate(-15deg);transform-origin:0 0">FastAdmin应用插件演示</div>
<div class="a" style="left:171px;top:252.1px;width:174px;height:0;white-space:nowrap;font-size:16px;line-height:0;color:rgba(0,0,0,.06);letter-spacing:0.2px;transform:rotate(-15deg);transform-origin:0 0">FastAdmin应用插件演示</div>
<div class="a" style="left:521px;top:252.1px;width:174px;height:0;white-space:nowrap;font-size:16px;line-height:0;color:rgba(0,0,0,.06);letter-spacing:0.2px;transform:rotate(-15deg);transform-origin:0 0">FastAdmin应用插件演示</div>
<div class="a" style="left:871px;top:252.1px;width:174px;height:0;white-space:nowrap;font-size:16px;line-height:0;color:rgba(0,0,0,.06);letter-spacing:0.2px;transform:rotate(-15deg);transform-origin:0 0">FastAdmin应用插件演示</div>
<div class="a" style="left:1221px;top:252.1px;width:174px;height:0;white-space:nowrap;font-size:16px;line-height:0;color:rgba(0,0,0,.06);letter-spacing:0.2px;transform:rotate(-15deg);transform-origin:0 0">FastAdmin应用插件演示</div>
<div class="a" style="left:1571px;top:252.1px;width:174px;height:0;white-space:nowrap;font-size:16px;line-height:0;color:rgba(0,0,0,.06);letter-spacing:0.2px;transform:rotate(-15deg);transform-origin:0 0">FastAdmin应用插件演示</div>
<div class="a" style="left:1921px;top:252.1px;width:174px;height:0;white-space:nowrap;font-size:16px;line-height:0;color:rgba(0,0,0,.06);letter-spacing:0.2px;transform:rotate(-15deg);transform-origin:0 0">FastAdmin应用插件演示</div>
<div class="a" style="left:-179px;top:390.0px;width:174px;height:0;white-space:nowrap;font-size:16px;line-height:0;color:rgba(0,0,0,.06);letter-spacing:0.2px;transform:rotate(-15deg);transform-origin:0 0">FastAdmin应用插件演示</div>
<div class="a" style="left:171px;top:390.0px;width:174px;height:0;white-space:nowrap;font-size:16px;line-height:0;color:rgba(0,0,0,.06);letter-spacing:0.2px;transform:rotate(-15deg);transform-origin:0 0">FastAdmin应用插件演示</div>
<div class="a" style="left:521px;top:390.0px;width:174px;height:0;white-space:nowrap;font-size:16px;line-height:0;color:rgba(0,0,0,.06);letter-spacing:0.2px;transform:rotate(-15deg);transform-origin:0 0">FastAdmin应用插件演示</div>
<div class="a" style="left:871px;top:390.0px;width:174px;height:0;white-space:nowrap;font-size:16px;line-height:0;color:rgba(0,0,0,.06);letter-spacing:0.2px;transform:rotate(-15deg);transform-origin:0 0">FastAdmin应用插件演示</div>
<div class="a" style="left:1221px;top:390.0px;width:174px;height:0;white-space:nowrap;font-size:16px;line-height:0;color:rgba(0,0,0,.06);letter-spacing:0.2px;transform:rotate(-15deg);transform-origin:0 0">FastAdmin应用插件演示</div>
<div class="a" style="left:1571px;top:390.0px;width:174px;height:0;white-space:nowrap;font-size:16px;line-height:0;color:rgba(0,0,0,.06);letter-spacing:0.2px;transform:rotate(-15deg);transform-origin:0 0">FastAdmin应用插件演示</div>
<div class="a" style="left:1921px;top:390.0px;width:174px;height:0;white-space:nowrap;font-size:16px;line-height:0;color:rgba(0,0,0,.06);letter-spacing:0.2px;transform:rotate(-15deg);transform-origin:0 0">FastAdmin应用插件演示</div>
<div class="a" style="left:-179px;top:527.9px;width:174px;height:0;white-space:nowrap;font-size:16px;line-height:0;color:rgba(0,0,0,.06);letter-spacing:0.2px;transform:rotate(-15deg);transform-origin:0 0">FastAdmin应用插件演示</div>
<div class="a" style="left:171px;top:527.9px;width:174px;height:0;white-space:nowrap;font-size:16px;line-height:0;color:rgba(0,0,0,.06);letter-spacing:0.2px;transform:rotate(-15deg);transform-origin:0 0">FastAdmin应用插件演示</div>
<div class="a" style="left:521px;top:527.9px;width:174px;height:0;white-space:nowrap;font-size:16px;line-height:0;color:rgba(0,0,0,.06);letter-spacing:0.2px;transform:rotate(-15deg);transform-origin:0 0">FastAdmin应用插件演示</div>
<div class="a" style="left:871px;top:527.9px;width:174px;height:0;white-space:nowrap;font-size:16px;line-height:0;color:rgba(0,0,0,.06);letter-spacing:0.2px;transform:rotate(-15deg);transform-origin:0 0">FastAdmin应用插件演示</div>
<div class="a" style="left:1221px;top:527.9px;width:174px;height:0;white-space:nowrap;font-size:16px;line-height:0;color:rgba(0,0,0,.06);letter-spacing:0.2px;transform:rotate(-15deg);transform-origin:0 0">FastAdmin应用插件演示</div>
<div class="a" style="left:1571px;top:527.9px;width:174px;height:0;white-space:nowrap;font-size:16px;line-height:0;color:rgba(0,0,0,.06);letter-spacing:0.2px;transform:rotate(-15deg);transform-origin:0 0">FastAdmin应用插件演示</div>
<div class="a" style="left:1921px;top:527.9px;width:174px;height:0;white-space:nowrap;font-size:16px;line-height:0;color:rgba(0,0,0,.06);letter-spacing:0.2px;transform:rotate(-15deg);transform-origin:0 0">FastAdmin应用插件演示</div>
<div class="a" style="left:-179px;top:665.8px;width:174px;height:0;white-space:nowrap;font-size:16px;line-height:0;color:rgba(0,0,0,.06);letter-spacing:0.2px;transform:rotate(-15deg);transform-origin:0 0">FastAdmin应用插件演示</div>
<div class="a" style="left:171px;top:665.8px;width:174px;height:0;white-space:nowrap;font-size:16px;line-height:0;color:rgba(0,0,0,.06);letter-spacing:0.2px;transform:rotate(-15deg);transform-origin:0 0">FastAdmin应用插件演示</div>
<div class="a" style="left:521px;top:665.8px;width:174px;height:0;white-space:nowrap;font-size:16px;line-height:0;color:rgba(0,0,0,.06);letter-spacing:0.2px;transform:rotate(-15deg);transform-origin:0 0">FastAdmin应用插件演示</div>
<div class="a" style="left:871px;top:665.8px;width:174px;height:0;white-space:nowrap;font-size:16px;line-height:0;color:rgba(0,0,0,.06);letter-spacing:0.2px;transform:rotate(-15deg);transform-origin:0 0">FastAdmin应用插件演示</div>
<div class="a" style="left:1221px;top:665.8px;width:174px;height:0;white-space:nowrap;font-size:16px;line-height:0;color:rgba(0,0,0,.06);letter-spacing:0.2px;transform:rotate(-15deg);transform-origin:0 0">FastAdmin应用插件演示</div>
<div class="a" style="left:1571px;top:665.8px;width:174px;height:0;white-space:nowrap;font-size:16px;line-height:0;color:rgba(0,0,0,.06);letter-spacing:0.2px;transform:rotate(-15deg);transform-origin:0 0">FastAdmin应用插件演示</div>
<div class="a" style="left:1921px;top:665.8px;width:174px;height:0;white-space:nowrap;font-size:16px;line-height:0;color:rgba(0,0,0,.06);letter-spacing:0.2px;transform:rotate(-15deg);transform-origin:0 0">FastAdmin应用插件演示</div>
<div class="a" style="left:-179px;top:803.7px;width:174px;height:0;white-space:nowrap;font-size:16px;line-height:0;color:rgba(0,0,0,.06);letter-spacing:0.2px;transform:rotate(-15deg);transform-origin:0 0">FastAdmin应用插件演示</div>
<div class="a" style="left:171px;top:803.7px;width:174px;height:0;white-space:nowrap;font-size:16px;line-height:0;color:rgba(0,0,0,.06);letter-spacing:0.2px;transform:rotate(-15deg);transform-origin:0 0">FastAdmin应用插件演示</div>
<div class="a" style="left:521px;top:803.7px;width:174px;height:0;white-space:nowrap;font-size:16px;line-height:0;color:rgba(0,0,0,.06);letter-spacing:0.2px;transform:rotate(-15deg);transform-origin:0 0">FastAdmin应用插件演示</div>
<div class="a" style="left:871px;top:803.7px;width:174px;height:0;white-space:nowrap;font-size:16px;line-height:0;color:rgba(0,0,0,.06);letter-spacing:0.2px;transform:rotate(-15deg);transform-origin:0 0">FastAdmin应用插件演示</div>
<div class="a" style="left:1221px;top:803.7px;width:174px;height:0;white-space:nowrap;font-size:16px;line-height:0;color:rgba(0,0,0,.06);letter-spacing:0.2px;transform:rotate(-15deg);transform-origin:0 0">FastAdmin应用插件演示</div>
<div class="a" style="left:1571px;top:803.7px;width:174px;height:0;white-space:nowrap;font-size:16px;line-height:0;color:rgba(0,0,0,.06);letter-spacing:0.2px;transform:rotate(-15deg);transform-origin:0 0">FastAdmin应用插件演示</div>
<div class="a" style="left:1921px;top:803.7px;width:174px;height:0;white-space:nowrap;font-size:16px;line-height:0;color:rgba(0,0,0,.06);letter-spacing:0.2px;transform:rotate(-15deg);transform-origin:0 0">FastAdmin应用插件演示</div></div><div class="a" style="left:1627px;top:830px;font-size:20px;line-height:26px;color:rgba(0,0,0,.28);white-space:nowrap">激活 <span style="letter-spacing:1px">Windows</span></div><div class="a" style="left:1627px;top:857px;font-size:15px;line-height:20px;color:rgba(0,0,0,.28);white-space:nowrap">转到“设置”以激活 <span style="letter-spacing:0.8px">Windows</span>。</div>
</div>
</body></html>
